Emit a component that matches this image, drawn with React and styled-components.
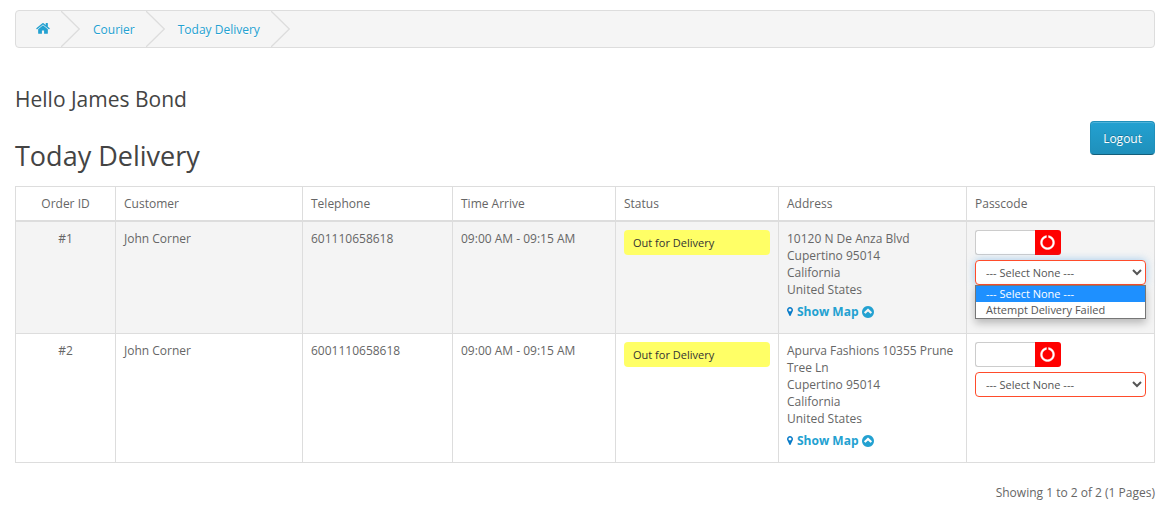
import React from "react";
import styled, { createGlobalStyle, css } from "styled-components";

const GlobalStyle = createGlobalStyle`
  * { box-sizing: border-box; }
  body {
    margin: 0;
    background: #fff;
    color: #666;
    font: 400 12px/17px "Open Sans", sans-serif;
  }
`;

const Page = styled.main`
  padding: 10px 13px 0 15px;
`;

const Breadcrumb = styled.nav`
  border: 1px solid #ddd;
  border-radius: 4px;
  background: #f5f5f5;
`;

const Crumbs = styled.ol`
  display: flex;
  margin: 0;
  padding: 0 0 0 7px;
  list-style: none;
`;

const Crumb = styled.li`
  display: flex;
  align-items: center;
  height: 36px;
`;

const CrumbLink = styled.a`
  padding: 0 11px 0 13px;
  color: #23a1d1;
  text-decoration: none;
  text-shadow: 0 1px 0 #fff;
`;

const Icon = styled.svg`
  display: block;
  fill: currentColor;
`;

const Separator = styled.svg`
  display: block;
  fill: none;
  stroke: #ddd;
  stroke-width: 1.3;
`;

const Greeting = styled.h2`
  margin: 40px 0 0;
  color: #444;
  font-size: 21px;
  font-weight: 400;
  line-height: 23px;
`;

const TitleRow = styled.header`
  display: flex;
  align-items: flex-start;
  justify-content: space-between;
  margin-top: 10px;
  height: 65px;
`;

const Title = styled.h1`
  margin: 20px 0 0;
  color: #444;
  font-size: 27px;
  font-weight: 400;
  line-height: 30px;
`;

const LogoutButton = styled.button`
  height: 34px;
  padding: 0 12px;
  border: 1px solid #1f90bb;
  border-bottom-color: #145e7a;
  border-radius: 4px;
  background: linear-gradient(#23a1d1, #1f90bb);
  box-shadow: inset 0 1px 0 rgba(255, 255, 255, 0.2);
  color: #fff;
  font: inherit;
  text-shadow: 0 -1px 0 rgba(0, 0, 0, 0.25);
`;

const Table = styled.table`
  width: 100%;
  border-collapse: collapse;
  table-layout: fixed;
`;

const Column = styled.col`
  width: ${(p) => p.$width}px;
`;

const cell = css`
  padding: 8px;
  border: 1px solid #ddd;
  text-align: ${(p) => (p.$center ? "center" : "left")};
  vertical-align: top;
`;

const HeadCell = styled.th`
  ${cell}
  border-bottom-width: 2px;
  font-weight: 400;
`;

const Cell = styled.td`
  ${cell}
`;

const Row = styled.tr`
  background: ${(p) => (p.$striped ? "#f4f4f4" : "#fff")};
`;

const Status = styled.div`
  padding: 4px 9px;
  border-radius: 4px;
  background: #ff6;
  color: #333;
  font-size: 11px;
`;

const Address = styled.div`
  white-space: pre-line;
`;

const MapLink = styled.a`
  display: flex;
  align-items: center;
  gap: 4px;
  height: 27px;
  color: #23a1d1;
  font-weight: 700;
  text-decoration: none;
`;

const Marker = styled.span`
  color: #0a7cc9;
`;

const CodeGroup = styled.div`
  display: flex;
  margin-bottom: 5px;
`;

const CodeInput = styled.input`
  width: 60px;
  height: 25px;
  padding: 0 8px;
  border: 1px solid #ccc;
  border-right: 0;
  border-radius: 3px 0 0 3px;
  background: #fff;
  font: inherit;
`;

const CodeButton = styled.button`
  display: grid;
  place-items: center;
  width: 26px;
  height: 25px;
  padding: 0 1px 1px 0;
  border: 0;
  border-radius: 0 3px 3px 0;
  background: #f00;
  color: #fff;
`;

const SelectBox = styled.div`
  position: relative;
`;

const Select = styled.select`
  display: block;
  width: 100%;
  height: 25px;
  padding: 0 1px 0 6px;
  border: 1px solid #ff4c2b;
  border-radius: 4px;
  background: #fff;
  box-shadow: ${(p) => (p.$open ? "0 0 8px rgba(102, 175, 233, 0.6)" : "none")};
  color: #555;
  font: 400 11px/16px "Open Sans", sans-serif;
`;

const Options = styled.ul`
  position: absolute;
  top: 100%;
  left: 0;
  right: 0;
  margin: 0;
  padding: 0;
  border: 1px solid #767676;
  background: #fff;
  box-shadow: 0 4px 8px rgba(0, 0, 0, 0.25);
  list-style: none;
`;

const Option = styled.li`
  padding: 0 10px;
  background: ${(p) => (p.$active ? "#1e90ff" : "#fff")};
  color: ${(p) => (p.$active ? "#fff" : "#555")};
  font-size: 11px;
  line-height: 16px;
`;

const Summary = styled.p`
  margin: 21px 0 0;
  text-align: right;
`;

const HOME =
  "M1472 992v480q0 26-19 45t-45 19h-384v-384h-256v384h-384q-26 0-45-19t-19-45v-480q0-1 .5-3t.5-3l575-474 575 474q1 2 1 6zm223-69l-62 74q-8 9-21 11h-3q-13 0-21-7l-692-577-692 577q-12 8-24 7-13-2-21-11l-62-74q-8-10-7-23.5t11-21.5l719-599q32-26 76-26t76 26l244 204v-195q0-14 9-23t23-9h192q14 0 23 9t9 23v408l219 182q10 8 11 21.5t-7 23.5z";
const MARKER =
  "M1152 640q0-106-75-181t-181-75-181 75-75 181 75 181 181 75 181-75 75-181zm256 0q0 109-33 179l-364 774q-16 33-47.5 52t-67.5 19-67.5-19-46.5-52l-365-774q-33-70-33-179 0-212 150-362t362-150 362 150 150 362z";
const NOTCH =
  "M1760 896q0 176-68.5 336t-184 275.5-275.5 184-336 68.5-336-68.5-275.5-184-184-275.5-68.5-336q0-213 97-398.5t265-305.5 374-151v228q-221 45-366.5 221t-145.5 406q0 130 51 248.5t136.5 204 204 136.5 248.5 51 248.5-51 204-136.5 136.5-204 51-248.5q0-230-145.5-406t-366.5-221v-228q206 31 374 151t265 305.5 97 398.5z";
const CHEVRON =
  "M1271 1101l102-102q19-19 19-45t-19-45l-432-432q-19-19-45-19t-45 19l-432 432q-19 19-19 45t19 45l102 102q19 19 45 19t45-19l285-285 285 285q19 19 45 19t45-19zm393-205q0 209-103 385.5t-279.5 279.5-385.5 103-385.5-103-279.5-279.5-103-385.5 103-385.5 279.5-279.5 385.5-103 385.5 103 279.5 279.5 103 385.5z";

const columns = [
  ["Order ID", 100],
  ["Customer", 187],
  ["Telephone", 150],
  ["Time Arrive", 163],
  ["Status", 163],
  ["Address", 188],
  ["Passcode", 188],
];

const orders = [
  {
    id: "#1",
    customer: "John Corner",
    telephone: "601110658618",
    time: "09:00 AM - 09:15 AM",
    status: "Out for Delivery",
    address: "10120 N De Anza Blvd\nCupertino 95014\nCalifornia\nUnited States",
    open: true,
  },
  {
    id: "#2",
    customer: "John Corner",
    telephone: "6001110658618",
    time: "09:00 AM - 09:15 AM",
    status: "Out for Delivery",
    address:
      "Apurva Fashions 10355 Prune Tree Ln\nCupertino 95014\nCalifornia\nUnited States",
    open: false,
  },
];

const choices = ["--- Select None ---", "Attempt Delivery Failed"];

function CrumbItem({ label, children }) {
  return (
    <Crumb>
      <CrumbLink href="#" aria-label={label}>
        {children}
      </CrumbLink>
      <Separator width="19" height="36" viewBox="0 0 19 36" aria-hidden="true">
        <path d="M0 0 18.300 18 0 36" />
      </Separator>
    </Crumb>
  );
}

function OrderRow({ order }) {
  return (
    <Row $striped={order.open}>
      <Cell $center>{order.id}</Cell>
      <Cell>{order.customer}</Cell>
      <Cell>{order.telephone}</Cell>
      <Cell>{order.time}</Cell>
      <Cell>
        <Status>{order.status}</Status>
      </Cell>
      <Cell>
        <Address>{order.address}</Address>
        <MapLink href="#">
          <Marker>
            <Icon width="6" height="9" viewBox="384 128 1024 1536">
              <path d={MARKER} />
            </Icon>
          </Marker>
          Show Map
          <Icon width="12" height="12" viewBox="128 128 1536 1536">
            <path d={CHEVRON} />
          </Icon>
        </MapLink>
      </Cell>
      <Cell>
        <CodeGroup>
          <CodeInput type="text" aria-label={`Passcode for order ${order.id}`} />
          <CodeButton type="button" aria-label="Submit passcode">
            <Icon width="15" height="15" viewBox="-30 -30 1852 1852">
              <path d={NOTCH} stroke="currentColor" strokeWidth="50" />
            </Icon>
          </CodeButton>
        </CodeGroup>
        <SelectBox>
          <Select $open={order.open} aria-label={`Delivery result for order ${order.id}`}>
            {choices.map((c) => (
              <option key={c}>{c}</option>
            ))}
          </Select>
          {order.open && (
            <Options role="listbox">
              {choices.map((c, i) => (
                <Option key={c} role="option" aria-selected={i === 0} $active={i === 0}>
                  {c}
                </Option>
              ))}
            </Options>
          )}
        </SelectBox>
      </Cell>
    </Row>
  );
}

export default function App() {
  return (
    <>
      <GlobalStyle />
      <Page>
        <Breadcrumb aria-label="Breadcrumb">
          <Crumbs>
            <CrumbItem label="Home">
              <Icon width="14" height="14" viewBox="64 130 1664 1664">
                <path d={HOME} />
              </Icon>
            </CrumbItem>
            <CrumbItem>Courier</CrumbItem>
            <CrumbItem>Today Delivery</CrumbItem>
          </Crumbs>
        </Breadcrumb>
        <Greeting>Hello James Bond</Greeting>
        <TitleRow>
          <Title>Today Delivery</Title>
          <LogoutButton type="button">Logout</LogoutButton>
        </TitleRow>
        <Table>
          <colgroup>
            {columns.map(([name, width]) => (
              <Column key={name} $width={width} />
            ))}
          </colgroup>
          <thead>
            <tr>
              {columns.map(([name], i) => (
                <HeadCell key={name} scope="col" $center={i === 0}>
                  {name}
                </HeadCell>
              ))}
            </tr>
          </thead>
          <tbody>
            {orders.map((o) => (
              <OrderRow key={o.id} order={o} />
            ))}
          </tbody>
        </Table>
        <Summary>Showing 1 to 2 of 2 (1 Pages)</Summary>
      </Page>
    </>
  );
}
